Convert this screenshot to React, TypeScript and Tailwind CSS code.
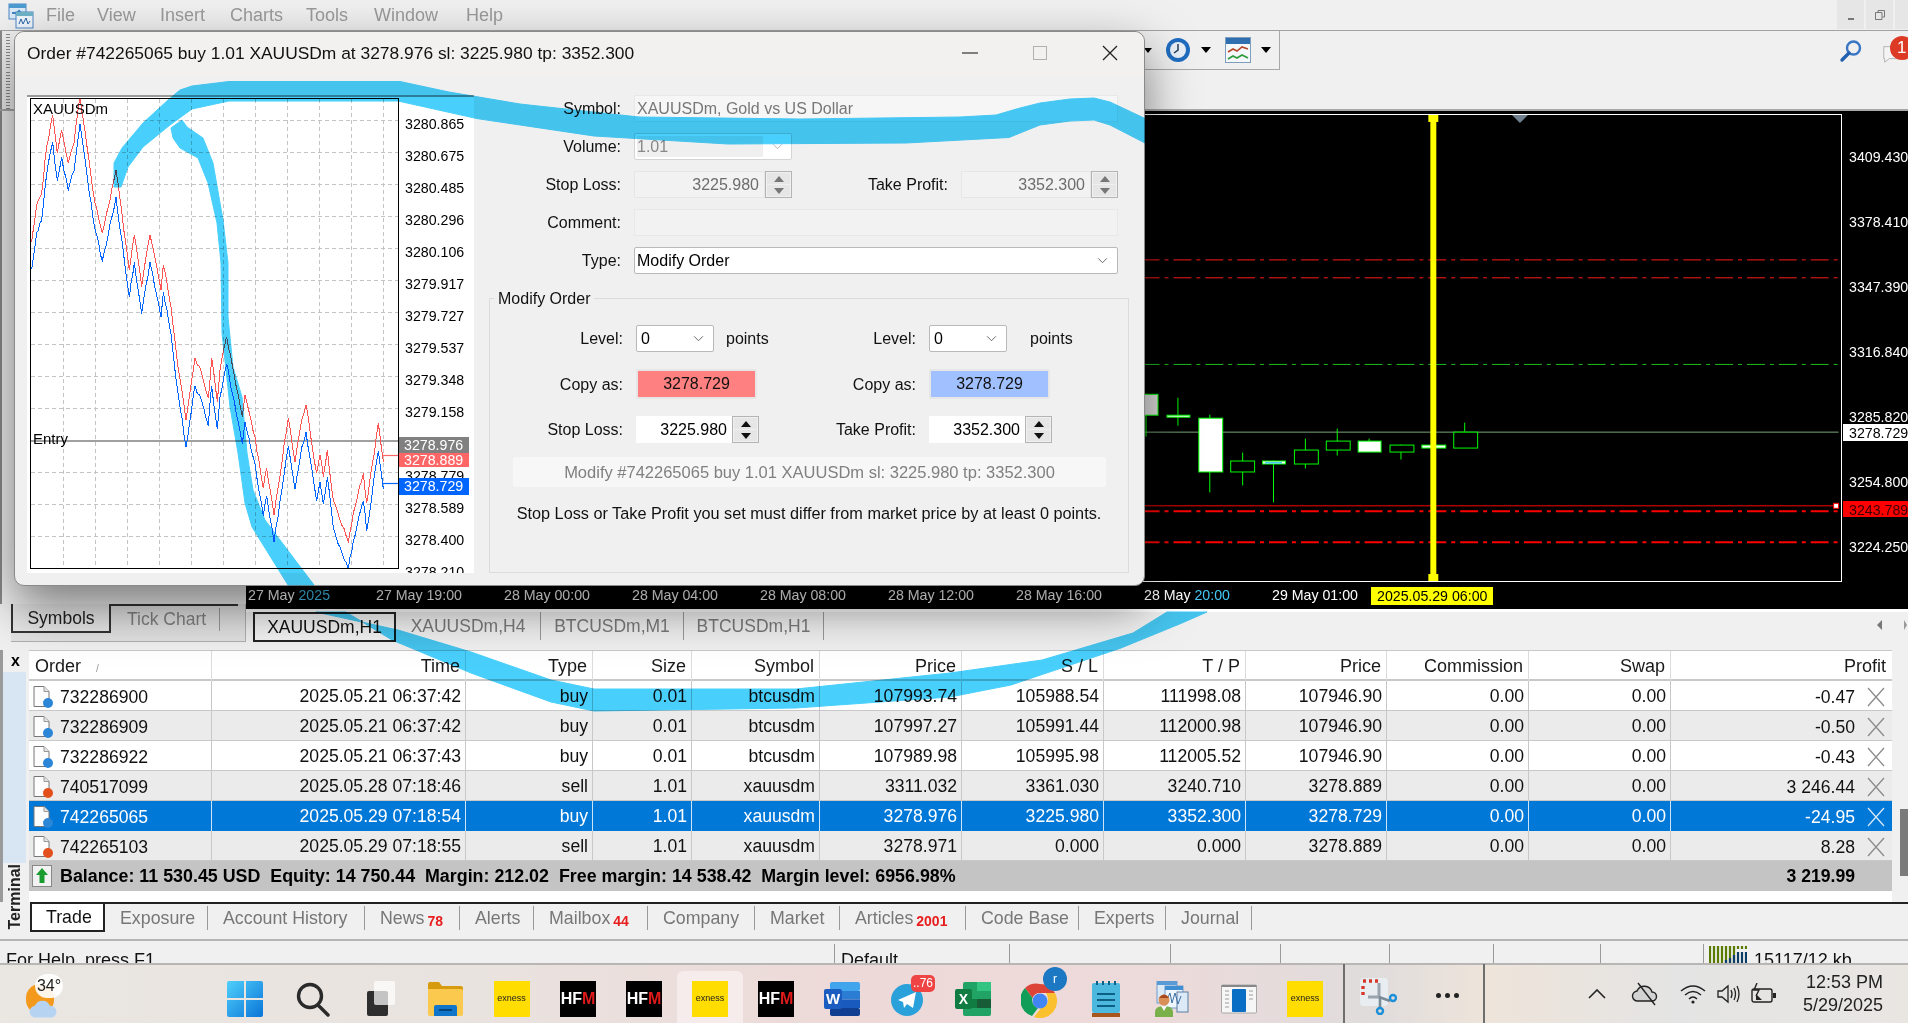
import type { ReactNode } from "react";
import clsx from "clsx";

const orders = [
  { id: "732286900", time: "2025.05.21 06:37:42", type: "buy", size: "0.01", sym: "btcusdm", price: "107993.74", sl: "105988.54", tp: "111998.08", cur: "107946.90", profit: "-0.47" },
  { id: "732286909", time: "2025.05.21 06:37:42", type: "buy", size: "0.01", sym: "btcusdm", price: "107997.27", sl: "105991.44", tp: "112000.98", cur: "107946.90", profit: "-0.50" },
  { id: "732286922", time: "2025.05.21 06:37:43", type: "buy", size: "0.01", sym: "btcusdm", price: "107989.98", sl: "105995.98", tp: "112005.52", cur: "107946.90", profit: "-0.43" },
  { id: "740517099", time: "2025.05.28 07:18:46", type: "sell", size: "1.01", sym: "xauusdm", price: "3311.032", sl: "3361.030", tp: "3240.710", cur: "3278.889", profit: "3 246.44" },
  { id: "742265065", time: "2025.05.29 07:18:54", type: "buy", size: "1.01", sym: "xauusdm", price: "3278.976", sl: "3225.980", tp: "3352.300", cur: "3278.729", profit: "-24.95" },
  { id: "742265103", time: "2025.05.29 07:18:55", type: "sell", size: "1.01", sym: "xauusdm", price: "3278.971", sl: "0.000", tp: "0.000", cur: "3278.889", profit: "8.28" },
];

const cols = "grid grid-cols-[183px_254px_127px_99px_128px_142px_142px_142px_141px_142px_142px_221px]";

const headers = ["Time", "Type", "Size", "Symbol", "Price", "S / L", "T / P", "Price", "Commission", "Swap"];

const terminalTabs = [
  { label: "Exposure", w: "w-[103px]" },
  { label: "Account History", w: "w-[157px]" },
  { label: "News", badge: "78", w: "w-[95px]" },
  { label: "Alerts", w: "w-[74px]" },
  { label: "Mailbox", badge: "44", w: "w-[114px]" },
  { label: "Company", w: "w-[107px]" },
  { label: "Market", w: "w-[85px]" },
  { label: "Articles", badge: "2001", w: "w-[126px]" },
  { label: "Code Base", w: "w-[113px]" },
  { label: "Experts", w: "w-[87px]" },
  { label: "Journal", w: "w-[86px]" },
];

const statusCells = [
  { w: "w-[829px]", text: "For Help, press F1" },
  { w: "w-[175px]", text: "Default" },
  { w: "w-[161px]" },
  { w: "w-[110px]" },
  { w: "w-[109px]" },
  { w: "w-[104px]" },
  { w: "w-[107px]" },
  { w: "w-[103px]" },
];

// price line, in zoomed chart coords (3x)
const askPoints = [
  [95, 455], [110, 345], [125, 310], [140, 170], [158, 75], [172, 190], [185, 120], [205, 220], [222, 160], [240, 20], [250, 90], [280, 310], [307, 430], [325, 350], [348, 240],
  [388, 540], [403, 435], [425, 590], [450, 435], [458, 470], [483, 600], [490, 525], [513, 650], [530, 800], [558, 990], [585, 805], [605, 850], [625, 925], [635, 805], [652, 935],
  [660, 840], [680, 740], [715, 915], [727, 980], [735, 915], [765, 1040], [790, 1195], [800, 1135], [822, 1275], [865, 985], [885, 1115], [905, 990], [918, 945], [950, 1150],
  [960, 1095], [970, 1160], [982, 1080], [1000, 1230], [1020, 1290], [1045, 1355], [1060, 1270], [1090, 1150], [1100, 1240], [1135, 1000], [1150, 1115],
];

const jagged = (shift: number, seed: number) => {
  const out: string[] = [];
  let n = seed;
  for (let i = 0; i < askPoints.length - 1; i++) {
    const [x1, y1] = askPoints[i];
    const [x2, y2] = askPoints[i + 1];
    const steps = Math.max(1, Math.round((x2 - x1) / 6));
    for (let s = 0; s < steps; s++) {
      const t = s / steps;
      n++;
      const r = Math.sin(n * 12.9898) * 43758.5453;
      const noise = s === 0 ? 0 : (r - Math.floor(r) - 0.5) * 16;
      out.push(`${(x1 + (x2 - x1) * t) / 3 - 31},${(y1 + (y2 - y1) * t + noise + shift) / 3 - 9}`);
    }
  }
  const last = askPoints[askPoints.length - 1];
  out.push(`${last[0] / 3 - 31},${(last[1] + shift) / 3 - 9}`);
  return out.join(" ");
};

const miniAxis = ["3280.865", "3280.675", "3280.485", "3280.296", "3280.106", "3279.917", "3279.727", "3279.537", "3279.348", "3279.158", "", "3278.779", "3278.589", "3278.400", "3278.210"];
const chartAxis = ["3409.430", "3378.410", "3347.390", "3316.840", "3285.820", "3254.800", "3224.250"];

const candles = [
  { x: 1135, w: 23, top: 394, bottom: 415, wt: 394, wb: 437, wx: 1146, fill: "#dddddd" },
  { x: 1167, w: 23, top: 415, bottom: 417, wt: 398, wb: 426, wx: 1178, fill: "#ffffff" },
  { x: 1199, w: 24, top: 418, bottom: 472, wt: 415, wb: 493, wx: 1210, fill: "#ffffff" },
  { x: 1231, w: 24, top: 461, bottom: 472, wt: 453, wb: 486, wx: 1243, fill: "#000000" },
  { x: 1263, w: 23, top: 461, bottom: 464, wt: 461, wb: 503, wx: 1274, fill: "#ffffff" },
  { x: 1295, w: 24, top: 450, bottom: 464, wt: 439, wb: 469, wx: 1306, fill: "#000000" },
  { x: 1327, w: 24, top: 441, bottom: 450, wt: 429, wb: 456, wx: 1338, fill: "#000000" },
  { x: 1359, w: 23, top: 441, bottom: 452, wt: 439, wb: 452, wx: 1370, fill: "#ffffff" },
  { x: 1391, w: 24, top: 445, bottom: 452, wt: 445, wb: 460, wx: 1402, fill: "#000000" },
  { x: 1423, w: 24, top: 445, bottom: 448, wt: 445, wb: 448, wx: 1434, fill: "#ffffff" },
  { x: 1455, w: 24, top: 432, bottom: 448, wt: 423, wb: 432, wx: 1466, fill: "#000000" },
];

const Chevron = ({ className }: { className?: string }) => (
  <svg viewBox="0 0 12 8" className={clsx("h-[7px] w-[11px]", className)} fill="none" stroke="currentColor" strokeWidth="1">
    <path d="M1 1.5 6 6.5 11 1.5" />
  </svg>
);

const Spin = ({ on, w }: { on?: boolean; w: string }) => (
  <div className={clsx("flex shrink-0 flex-col gap-[1px] border border-[#b4b4b4] bg-[#f0f0f0] p-[1px]", w)}>
    {[0, 1].map((i) => (
      <div key={i} className={clsx("flex flex-1 items-center justify-center bg-[#e6e6e6]", on ? "text-[#111]" : "text-[#777]")}>
        <svg viewBox="0 0 10 6" className="h-[6px] w-[10px]" fill="currentColor">
          <path d={i === 0 ? "M5 0 10 6H0Z" : "M0 0H10L5 6Z"} />
        </svg>
      </div>
    ))}
  </div>
);

const NumField = ({ value, on, w, spin }: { value: string; on?: boolean; w: string; spin: string }) => (
  <div className="flex h-[27px]">
    <div className={clsx("flex items-center justify-end pr-[5px]", w, on ? "bg-white text-black" : "border border-[#e6e6e6] bg-[#f2f2f2] text-[#6d6d6d]")}>{value}</div>
    <Spin on={on} w={spin} />
  </div>
);

const Combo = ({ value, className }: { value: string; className?: string }) => (
  <div className={clsx("flex h-[27px] items-center justify-between rounded-[2px] border border-[#b9b9b9] bg-white pr-[9px] text-black", className)}>
    <span>{value}</span>
    <Chevron className="text-[#555]" />
  </div>
);

const Label = ({ children }: { children: ReactNode }) => <div className="text-right leading-[27px] text-[#111]">{children}</div>;

const Gripper = ({ className }: { className?: string }) => (
  <div className={clsx("w-[4px] bg-[repeating-linear-gradient(0deg,#8c8c8c_0,#8c8c8c_1px,#f0f0f0_1px,#f0f0f0_3px)]", className)} />
);

const MiniChart = () => {
  const ask = jagged(0, 3);
  const bid = jagged(82, 91);
  return (
    <div className="relative flex h-[478px] w-[447px] shrink-0 overflow-hidden border-t-2 border-[#9a9a9a] bg-white pl-[3px] pt-[1px]">
      <div className="relative h-[471px] w-[369px] shrink-0 border border-black">
        <svg viewBox="0 0 367 469" className="absolute inset-0 h-full w-full">
          {Array.from({ length: 11 }, (_, i) => (
            <line key={i} x1={32.5 + i * 32} x2={32.5 + i * 32} y1="0" y2="469" stroke="#c4c4c4" strokeDasharray="4 3" />
          ))}
          {Array.from({ length: 14 }, (_, i) =>
            i === 10 ? null : <line key={i} x1="0" x2="367" y1={21.5 + i * 32} y2={21.5 + i * 32} stroke="#c4c4c4" strokeDasharray="4 3" />
          )}
          <line x1="0" x2="367" y1="342" y2="342" stroke="#808080" strokeWidth="1.4" />
          <polyline points={ask} fill="none" stroke="#ff5555" strokeWidth="1" shapeRendering="crispEdges" />
          <polyline points={bid} fill="none" stroke="#0066ff" strokeWidth="1" shapeRendering="crispEdges" />
          <path d="M352 356.5H367" stroke="#ff6666" strokeWidth="1.2" />
          <path d="M352 384.5H367" stroke="#0066ff" strokeWidth="1.2" />
        </svg>
        <span className="absolute left-[2px] top-[0px] text-[15px] leading-[20px] text-black">XAUUSDm</span>
        <span className="absolute left-[2px] top-[330px] text-[15px] leading-[20px] text-black">Entry</span>
      </div>
      <div className="ml-[6px] pt-[10px] text-[14.2px] leading-[32px] text-black">
        {miniAxis.map((v, i) => (
          <div key={i} className="h-[32px]">{v}</div>
        ))}
      </div>
      <div className="absolute left-[372px] top-[340px] flex w-[70px] flex-col text-[14.2px] text-white">
        <div className="h-[16px] bg-[#808080] pl-[5px] leading-[17px]">3278.976</div>
        <div className="h-[14px] bg-[#ff6666] pl-[5px] leading-[14px]">3278.889</div>
      </div>
      <div className="absolute left-[372px] top-[381px] h-[17px] w-[70px] bg-[#0066ff] pl-[5px] text-[14.2px] leading-[17px] text-white">3278.729</div>
    </div>
  );
};

const OrderDialog = () => (
  <div className="absolute left-[14px] top-[31px] z-10 flex h-[555px] w-[1131px] flex-col overflow-visible rounded-[10px] border border-[#8a8a8a] bg-[#f0f0f0] text-[16px] shadow-[0_20px_50px_rgba(0,0,0,0.5)]">
    <div className="flex h-[44px] shrink-0 items-center justify-between rounded-t-[10px] bg-[#f3f1f0] pb-[2px] pl-[12px] pr-[26px]">
      <span className="text-[17.4px] text-[#111]">Order #742265065 buy 1.01 XAUUSDm at 3278.976 sl: 3225.980 tp: 3352.300</span>
      <div className="flex items-center gap-[55px]">
        <svg viewBox="0 0 16 16" className="h-[16px] w-[16px]"><path d="M0 8H16" stroke="#333" strokeWidth="1.2" /></svg>
        <svg viewBox="0 0 14 14" className="h-[14px] w-[14px]"><rect x=".5" y=".5" width="13" height="13" fill="none" stroke="#b0b0b0" /></svg>
        <svg viewBox="0 0 16 16" className="h-[16px] w-[16px]"><path d="M1 1 15 15M15 1 1 15" stroke="#222" strokeWidth="1.3" /></svg>
      </div>
    </div>
    <div className="flex flex-1 pl-[12px] pt-[19px]">
      <MiniChart />
      <div className="flex-1">
        <div className="grid grid-cols-[147px_158px_143px_157px] gap-x-[13px] gap-y-[11px]">
          <Label>Symbol:</Label>
          <div className="col-span-3 flex h-[27px] items-center border border-[#e8e8e8] bg-[#f6f6f6] pl-[2px] text-[#777]">XAUUSDm, Gold vs US Dollar</div>
          <Label>Volume:</Label>
          <div className="col-span-3 flex">
            <div className="flex h-[27px] w-[158px] items-center justify-between rounded-[2px] border border-[#d4d4d4] bg-white pl-[2px] pr-[8px] text-[#888]">
              <span className="flex h-[21px] w-[126px] items-center bg-[#efefef]">1.01</span>
              <Chevron className="text-[#aaa]" />
            </div>
          </div>
          <Label>Stop Loss:</Label>
          <NumField value="3225.980" w="w-[131px]" spin="w-[27px]" />
          <Label>Take Profit:</Label>
          <NumField value="3352.300" w="w-[130px]" spin="w-[27px]" />
          <Label>Comment:</Label>
          <div className="col-span-3 h-[27px] border border-[#e8e8e8] bg-[#f2f2f2]" />
          <Label>Type:</Label>
          <Combo value="Modify Order" className="col-span-3 pl-[2px]" />
        </div>
        <div className="relative ml-[15px] mt-[24px] h-[275px] w-[640px] border border-[#dcdcdc]">
          <span className="absolute left-[4px] top-[-10px] bg-[#f0f0f0] px-[4px] leading-[20px] text-[#111]">Modify Order</span>
          <div className="mt-[26px] grid grid-cols-[133px_165px_102px_auto] items-center gap-x-[13px]">
            <Label>Level:</Label>
            <div className="flex items-center gap-[12px]">
              <Combo value="0" className="w-[78px] pl-[4px]" />
              <span className="text-[#111]">points</span>
            </div>
            <Label>Level:</Label>
            <div className="flex items-center gap-[23px]">
              <Combo value="0" className="w-[78px] pl-[4px]" />
              <span className="text-[#111]">points</span>
            </div>
          </div>
          <div className="mt-[17px] grid grid-cols-[133px_165px_102px_auto] items-center gap-x-[13px]">
            <Label>Copy as:</Label>
            <div className="flex h-[30px] w-[121px] items-center justify-center rounded-[2px] border-2 border-[#e6e6e6] bg-[#ff8080] text-[#111]">3278.729</div>
            <Label>Copy as:</Label>
            <div className="flex h-[30px] w-[121px] items-center justify-center rounded-[2px] border-2 border-[#e6e6e6] bg-[#a0c0ff] text-[#111]">3278.729</div>
          </div>
          <div className="mt-[17px] grid grid-cols-[133px_165px_102px_auto] items-center gap-x-[13px]">
            <Label>Stop Loss:</Label>
            <NumField on value="3225.980" w="w-[96px]" spin="w-[27px]" />
            <Label>Take Profit:</Label>
            <NumField on value="3352.300" w="w-[96px]" spin="w-[27px]" />
          </div>
          <div className="ml-[23px] mt-[14px] flex h-[30px] w-[593px] items-center justify-center rounded-[3px] bg-[#f7f7f7] text-[16.5px] text-[#808080]">
            Modify #742265065 buy 1.01 XAUUSDm sl: 3225.980 tp: 3352.300
          </div>
          <div className="mt-[15px] text-center text-[16.25px] leading-[22px] text-[#111]">
            Stop Loss or Take Profit you set must differ from market price by at least 0 points.
          </div>
        </div>
      </div>
    </div>
  </div>
);

const MarketChart = () => (
  <svg viewBox="246 114 1596 468" className="absolute inset-0 h-full w-full">
    <g fill="none">
      <path d="M246 259.5H1842M246 277.5H1842" stroke="#ff1a1a" strokeDasharray="18 5 4 5" />
      <path d="M246 364.5H1842" stroke="#1fbf1f" strokeDasharray="18 5 4 5" />
      <path d="M246 512H1842M246 543H1842" stroke="#ff0000" strokeWidth="2" strokeDasharray="18 5 4 5" />
      <path d="M246 432.5H1842" stroke="#7ba87b" />
      <path d="M246 506.5H1842" stroke="#ff0000" />
    </g>
    {candles.map((c) => (
      <g key={c.x}>
        <line x1={c.wx + 0.5} x2={c.wx + 0.5} y1={c.wt} y2={c.wb} stroke="#00ff00" />
        <rect x={c.x + 0.5} y={c.top + 0.5} width={c.w} height={c.bottom - c.top} fill={c.fill} stroke="#00ff00" />
      </g>
    ))}
    <rect x="1266" y="462.5" width="17" height="1.5" fill="#44c8f5" />
    <rect x="1432" y="114" width="6" height="468" fill="#ffff00" />
    <rect x="1430" y="114" width="10" height="7" fill="#ffff00" />
    <rect x="1430" y="575" width="10" height="7" fill="#ffff00" />
    <path d="M1514 114H1530L1522 122Z" fill="#708090" />
    <rect x="1837" y="504" width="5" height="5" fill="#fff" stroke="#ff0000" />
  </svg>
);

const OrderIcon = ({ sell }: { sell: boolean }) => (
  <svg viewBox="0 0 22 24" className="h-[24px] w-[22px] shrink-0">
    <path d="M2 1.5H12L17 6.5V21.5H2Z" fill="#fdfdfd" stroke="#777" />
    <path d="M12 1.5V6.5H17" fill="#e2e2e2" stroke="#999" />
    <circle cx="16" cy="18" r="5" fill={sell ? "#e4501c" : "#2b86d8"} />
  </svg>
);

const Stroke = () => (
  <svg viewBox="0 0 1908 1023" className="pointer-events-none absolute inset-0 z-20 h-full w-full mix-blend-multiply">
    <g fill="#48cffc" stroke="#48cffc" strokeLinejoin="round">
      <polygon points="114,187 114,163 122,148 143,123 168,100 180,90 192,86 229,81.5 400,81.5 449,92 520,104 639,117 800,119 960,117 996,115 1020,108 1040,103 1070,99 1094,98 1110,102 1145,118.5 1145,143 1110,125 1094,120 1070,121 1040,125 1025,131 1009,137.5 906,143 728,144 594,136 477,118.6 398,101 229,101 192,109 170,125 143,147 128,167 121,187" />
      <polygon points="171,128 182,120 187,127 203,138 213,163 223,220 228,263 228,317 233,367 242,397 247,453 253,490 265,520 280,540 314,585 288,585 252,527 245,503 238,453 230,407 222,333 221,263 217,223 208,183 198,158 180,148 173,138" />
      <polygon points="316,612 398,630 471,652 551,680 594,689 796,689 950,673 1042,660 1133,633 1167,612 1207,612 1182,623 1121,648 1011,685 950,697 796,708 594,711 551,702 471,673 392,640 346,612" />
    </g>
  </svg>
);

const ExnessTile = () => (
  <div className="flex h-[36px] w-[36px] items-center justify-center bg-[#ffdd00] text-[9px] text-[#222]">exness</div>
);

const HfmTile = () => (
  <div className="flex h-[36px] w-[36px] items-center justify-center bg-black text-[16px] font-bold leading-none text-white">
    HF<span className="text-[#e01a1a]">M</span>
  </div>
);

const taskbarIcons: { w: string; active?: boolean; node: ReactNode }[] = [
  {
    w: "w-[66px]",
    node: (
      <svg viewBox="0 0 36 36" className="h-[36px] w-[36px]">
        <defs>
          <linearGradient id="win" x1="0" y1="0" x2="1" y2="1">
            <stop offset="0" stopColor="#4fd0fb" />
            <stop offset="1" stopColor="#0a74d8" />
          </linearGradient>
        </defs>
        <path d="M2 0H17V17H0V2Q0 0 2 0ZM19 0H34Q36 0 36 2V17H19ZM0 19H17V36H2Q0 36 0 34ZM19 19H36V34Q36 36 34 36H19Z" fill="url(#win)" />
      </svg>
    ),
  },
  {
    w: "w-[70px]",
    node: (
      <svg viewBox="0 0 36 36" className="h-[36px] w-[36px]" fill="none" stroke="#2a2a2a" strokeWidth="3.4" strokeLinecap="round">
        <circle cx="15" cy="15" r="11.5" />
        <path d="M24 25 33 34" />
      </svg>
    ),
  },
  {
    w: "w-[64px]",
    node: (
      <svg viewBox="0 0 36 36" className="h-[36px] w-[36px]">
        <rect x="5" y="10" width="21" height="25" rx="2" fill="#2e2e2e" />
        <rect x="12" y="0" width="21" height="24" rx="2" fill="#ffffff" fillOpacity=".72" />
      </svg>
    ),
  },
  {
    w: "w-[66px]",
    node: (
      <svg viewBox="0 0 36 36" className="h-[36px] w-[36px]">
        <path d="M1 3Q1 1 3 1H12L15 5H34Q36 5 36 7V12H1Z" fill="#d79b0f" />
        <path d="M1 8H34Q36 8 36 10V33Q36 35 34 35H3Q1 35 1 33Z" fill="#fcc94f" />
        <path d="M7 35V26Q7 24 9 24H28Q30 24 30 26V35Z" fill="#1176c9" />
        <rect x="12" y="28" width="13" height="2" fill="#06467f" />
      </svg>
    ),
  },
  { w: "w-[67px]", node: <ExnessTile /> },
  { w: "w-[66px]", node: <HfmTile /> },
  { w: "w-[66px]", node: <HfmTile /> },
  { w: "w-[66px]", active: true, node: <ExnessTile /> },
  { w: "w-[66px]", node: <HfmTile /> },
  {
    w: "w-[68px]",
    node: (
      <svg viewBox="0 0 38 36" className="h-[36px] w-[38px]">
        <rect x="6" y="1" width="30" height="9" rx="2" fill="#41a5ee" />
        <rect x="6" y="10" width="30" height="8.5" fill="#2b7cd3" />
        <rect x="6" y="18.5" width="30" height="8.5" fill="#185abd" />
        <rect x="6" y="27" width="30" height="8" rx="2" fill="#103f91" />
        <rect x="0" y="8" width="18" height="20" rx="2" fill="#1a5cc0" />
        <text x="9" y="23" textAnchor="middle" fontSize="15" fontWeight="700" fill="#fff" fontFamily="Liberation Sans">W</text>
      </svg>
    ),
  },
  {
    w: "w-[62px]",
    node: (
      <div className="relative h-[36px] w-[36px]">
        <svg viewBox="0 0 36 36" className="h-[36px] w-[36px]">
          <circle cx="17" cy="19" r="16" fill="#2aa1da" />
          <path d="M8 19 26 11 23 27 17 23 14 27 13 21Z" fill="#fff" />
        </svg>
        <span className="absolute right-[-9px] top-[-6px] rounded-[5px] bg-[#ee4444] px-[2px] text-[12px] leading-[17px] text-white">..76</span>
      </div>
    ),
  },
  {
    w: "w-[70px]",
    node: (
      <svg viewBox="0 0 38 36" className="h-[36px] w-[38px]">
        <rect x="8" y="1" width="28" height="34" rx="2" fill="#21a366" />
        <rect x="22" y="1" width="14" height="9" fill="#33c481" />
        <rect x="8" y="18" width="14" height="9" fill="#107c41" />
        <rect x="22" y="18" width="14" height="9" fill="#185c37" />
        <rect x="0" y="8" width="17" height="20" rx="2" fill="#107c41" />
        <text x="8.5" y="23" textAnchor="middle" fontSize="14" fontWeight="700" fill="#fff" fontFamily="Liberation Sans">X</text>
      </svg>
    ),
  },
  {
    w: "w-[62px]",
    node: (
      <div className="relative h-[38px] w-[38px]">
        <svg viewBox="0 0 38 38" className="h-[38px] w-[38px]">
          <path d="M19 4A17 17 0 0 1 34 13H19A8 8 0 0 0 11.5 18L4 8A17 17 0 0 1 19 4Z" fill="#db4437" />
          <path d="M4 8 11.5 18A8 8 0 0 0 17 28L11 36A17 17 0 0 1 4 8Z" fill="#0f9d58" />
          <path d="M34 13A17 17 0 0 1 13 37L20 28A8 8 0 0 0 27 19Q27 16 25 13Z" fill="#fbc02d" />
          <circle cx="19" cy="21" r="7.5" fill="#4285f4" />
        </svg>
        <span className="absolute right-[-8px] top-[-13px] flex h-[24px] w-[24px] items-center justify-center rounded-full bg-[#1c78c2] text-[12px] text-white">r</span>
      </div>
    ),
  },
  {
    w: "w-[70px]",
    node: (
      <svg viewBox="0 0 30 36" className="h-[36px] w-[30px]">
        <rect x="1" y="2" width="28" height="30" rx="2" fill="#4db8de" />
        <rect x="1" y="32" width="28" height="4" fill="#a8561d" />
        <path d="M6 13H24M6 19H24M6 25H24" stroke="#0d5f86" strokeWidth="2" />
        <path d="M6 0V4M12 0V4M18 0V4M24 0V4" stroke="#0d5f86" strokeWidth="2" />
      </svg>
    ),
  },
  {
    w: "w-[62px]",
    node: (
      <svg viewBox="0 0 34 36" className="h-[36px] w-[34px]">
        <rect x="2" y="0" width="20" height="22" fill="#dce9f7" stroke="#6f9cc9" />
        <rect x="2" y="0" width="20" height="4" fill="#5b9bd5" />
        <rect x="10" y="5" width="18" height="22" fill="#eef5fc" stroke="#6f9cc9" />
        <rect x="10" y="5" width="18" height="4" fill="#3f8ed2" />
        <rect x="22" y="11" width="11" height="20" fill="#dce9f7" stroke="#5d7f9f" />
        <path d="M12 18 15 12 17 22 20 12 23 23 26 15" fill="none" stroke="#3a6fa5" />
        <circle cx="9" cy="19" r="5.5" fill="#d98f55" />
        <path d="M4 17Q9 10 14 17" fill="#a5481f" />
        <path d="M0 36V31Q0 25 9 25 18 25 18 31V36Z" fill="#79b04a" />
        <path d="M6 25 9 30 12 25Z" fill="#f4f4f4" />
      </svg>
    ),
  },
  {
    w: "w-[72px]",
    node: (
      <svg viewBox="0 0 36 36" className="h-[36px] w-[36px]">
        <rect x=".5" y="4" width="35" height="28" rx="1" fill="#f6f6f6" stroke="#a8a8a8" />
        <rect x=".5" y="4" width="35" height="2" fill="#888" />
        <rect x="11" y="8" width="14" height="23" rx="1" fill="#0a6fc4" />
        <path d="M4 10H8M4 14H8M4 18H8M4 22H8M4 26H8M28 10H32M28 14H32M28 18H32" stroke="#c9c9c9" strokeWidth="2" />
      </svg>
    ),
  },
  { w: "w-[60px]", node: <ExnessTile /> },
];

const App = () => (
  <div className="relative isolate flex h-[1023px] w-[1908px] flex-col overflow-hidden bg-[#f0f0f0] font-['Liberation_Sans',Arial,sans-serif] text-black">
    {/* menu */}
    <div className="flex h-[31px] shrink-0 items-center justify-between border-b border-[#a2a2a2] bg-[#f0f0f0] text-[18px] text-[#9a9a9a]">
      <div className="flex items-center pt-[1px]">
        <svg viewBox="0 0 26 26" className="ml-[8px] h-[26px] w-[26px]">
          <rect x="1" y="1" width="17" height="15" fill="#dceaf8" stroke="#4c86c6" />
          <rect x="1" y="1" width="17" height="4" fill="#4c9bd0" />
          <path d="M4 10H9L11 8 13 10H15" fill="none" stroke="#3f83c4" strokeWidth="2" />
          <rect x="8" y="9" width="17" height="16" fill="#eff6fd" stroke="#4c86c6" />
          <rect x="8" y="9" width="17" height="4" fill="#6fb3c9" />
          <path d="M11 21 13 16 15 21 18 15 20 21 22 18" fill="none" stroke="#2b64a8" />
        </svg>
        <span className="ml-[12px] w-[51px]">File</span>
        <span className="w-[63px]">View</span>
        <span className="w-[70px]">Insert</span>
        <span className="w-[76px]">Charts</span>
        <span className="w-[68px]">Tools</span>
        <span className="w-[92px]">Window</span>
        <span>Help</span>
      </div>
      <div className="flex h-[29px] self-start">
        <div className="mr-[2px] flex w-[27px] items-end justify-center bg-[#e6e6e6] pb-[9px]"><div className="h-[2px] w-[6px] bg-[#777]" /></div>
        <div className="mr-[2px] flex w-[27px] items-center justify-center bg-[#e6e6e6]">
          <svg viewBox="0 0 10 10" className="h-[10px] w-[10px]" fill="none" stroke="#777"><path d="M3 2.5V.5H9.5V7H7.5M.5 2.5H7V9.5H.5Z" /></svg>
        </div>
        <div className="w-[13px] bg-[#e6e6e6]" />
      </div>
    </div>

    {/* toolbar */}
    <div className="flex h-[80px] shrink-0 justify-between border-b-2 border-[#a8a8a8] bg-[#f0f0f0]">
      <div className="flex w-[1145px] shrink-0 flex-col gap-[3px] border-l-2 border-[#8a8a8a] pl-[4px] pt-[3px]">
        <Gripper className="h-[34px]" />
        <Gripper className="h-[38px]" />
      </div>
      <div className="mr-auto flex h-[39px] w-[135px] items-center border-b border-r border-[#a8a8a8]">
        <div className="ml-[-1px] h-0 w-0 border-x-[4px] border-t-[5px] border-x-transparent border-t-black" />
        <svg viewBox="0 0 26 26" className="ml-[13px] h-[26px] w-[26px]">
          <circle cx="13" cy="13" r="12" fill="#1f6cc0" />
          <circle cx="13" cy="13" r="8" fill="#e8eff6" />
          <path d="M13 7V13L9 16" fill="none" stroke="#243e5c" strokeWidth="1.5" />
        </svg>
        <div className="ml-[10px] h-0 w-0 border-x-[5px] border-t-[6px] border-x-transparent border-t-black" />
        <svg viewBox="0 0 26 26" className="ml-[14px] h-[26px] w-[26px]">
          <rect x=".5" y=".5" width="25" height="25" fill="#f5f8fb" stroke="#7f9dbd" />
          <rect x="1" y="1" width="24" height="6" fill="#2f6fb0" />
          <path d="M3 15 8 12 12 14 17 10 23 12" fill="none" stroke="#b5462a" strokeWidth="1.6" />
          <path d="M3 22 8 19 12 21 17 18 23 21" fill="none" stroke="#2e9a3a" strokeWidth="1.6" />
        </svg>
        <div className="ml-[10px] h-0 w-0 border-x-[5px] border-t-[6px] border-x-transparent border-t-black" />
      </div>
      <div className="flex h-[39px] items-center pr-[5px]">
        <svg viewBox="0 0 24 24" className="mr-[18px] h-[24px] w-[24px]" fill="none" strokeLinecap="round">
          <circle cx="14.5" cy="9" r="6.5" stroke="#3a76c4" strokeWidth="2.4" />
          <path d="M10 14 3 21" stroke="#2260b0" strokeWidth="3.4" />
        </svg>
        <div className="relative h-[30px] w-[22px]">
          <svg viewBox="0 0 24 24" className="absolute left-0 top-[7px] h-[22px] w-[22px]" fill="#f4f4f4" stroke="#b0b0b0">
            <path d="M3 4H21V17H9L4 21V17H3Z" />
          </svg>
          <span className="absolute left-[9px] top-[0px] flex h-[24px] w-[24px] items-center justify-start rounded-full bg-[#dd3a25] pl-[7px] text-[17px] leading-none text-white">1</span>
        </div>
      </div>
    </div>

    <div className="flex h-[539px] shrink-0">
      {/* symbols pane */}
      <div className="flex w-[246px] shrink-0 flex-col text-[17.5px]">
        <div className="flex flex-1 gap-[3px] border-l-2 border-[#8a8a8a] bg-[#f0f0f0] pl-[4px]">
          <Gripper className="h-[480px] bg-none" />
        </div>
        <div className="h-[46px] shrink-0 bg-[#f0f0f0] pl-[11px]">
          <div className="flex h-[38px] border-r border-b border-[#b0b0b0] bg-[#e2e2e2]">
            <div className="flex h-[29px] w-[100px] items-center justify-center border-x-2 border-b-2 border-[#333] bg-[#e8e8e8] pt-[1px] text-[#222]">Symbols</div>
            <div className="h-[29px] w-[127px] border-t-2 border-[#333] pl-[16px] pt-[2px]">
              <div className="h-[23px] w-[93px] border-r border-[#999] leading-[22px] text-[#808080]">Tick Chart</div>
            </div>
          </div>
        </div>
      </div>
      <div className="flex flex-1 flex-col">
        {/* chart */}
        <div className="flex h-[498px] shrink-0 flex-col bg-black text-[14.2px] text-white">
          <div className="mt-[3px] flex h-[468px]">
            <div className="relative w-[1596px] shrink-0 border border-white">
              <MarketChart />
            </div>
            <div className="relative flex-1 pl-[7px] pt-[11px]">
              {chartAxis.map((v) => (
                <div key={v} className="h-[65px] leading-[65px]">{v}</div>
              ))}
              <div className="absolute left-[1px] top-[310px] h-[17px] w-[65px] bg-white pl-[6px] leading-[18px] text-black">3278.729</div>
              <div className="absolute left-[1px] top-[387px] h-[16px] w-[65px] bg-[#ff0000] pl-[6px] leading-[18px] text-[#3a0000]">3243.789</div>
            </div>
          </div>
          <div className="flex h-[27px] items-center pl-[2px]">
            <span className="w-[128px]">27 May <span className="text-[#44c8f5]">2025</span></span>
            <span className="w-[128px]">27 May 19:00</span>
            <span className="w-[128px]">28 May 00:00</span>
            <span className="w-[128px]">28 May 04:00</span>
            <span className="w-[128px]">28 May 08:00</span>
            <span className="w-[128px]">28 May 12:00</span>
            <span className="w-[128px]">28 May 16:00</span>
            <span className="w-[128px]">28 May <span className="text-[#44c8f5]">20:00</span></span>
            <span className="w-[99px]">29 May 01:00</span>
            <span className="h-[18px] bg-[#ffff00] px-[6px] leading-[18px] text-black">2025.05.29 06:00</span>
          </div>
        </div>
        {/* chart tabs */}
        <div className="flex h-[41px] shrink-0 border-t-[3px] border-white bg-[#f0f0f0] text-[17.5px]">
          <div className="ml-[7px] flex h-[30px] w-[143px] items-center justify-center border-2 border-[#222] bg-[#f4f4f4] text-[#111]">XAUUSDm,H1</div>
          <div className="flex h-[28px] w-[145px] items-center justify-center border-r border-[#999] text-[#7a7a7a]">XAUUSDm,H4</div>
          <div className="flex h-[28px] w-[143px] items-center justify-center border-r border-[#999] text-[#7a7a7a]">BTCUSDm,M1</div>
          <div className="flex h-[28px] w-[140px] items-center justify-center border-r border-[#999] text-[#7a7a7a]">BTCUSDm,H1</div>
          <div className="flex flex-1 items-start justify-end gap-[22px] pr-[1px] pt-[8px]">
            <div className="h-0 w-0 border-y-[5px] border-r-[5px] border-y-transparent border-r-[#777]" />
            <div className="h-0 w-0 border-y-[5px] border-l-[3px] border-y-transparent border-l-[#999]" />
          </div>
        </div>
      </div>
    </div>

    {/* terminal */}
    <div className="flex h-[252px] shrink-0 text-[17.6px]">
      <div className="w-[29px] shrink-0 border-l-[3px] border-[#9a9a9a] bg-[#f0f0f0]">
        <div className="h-[22px] pl-[8px] text-[16px] font-bold leading-[22px]">x</div>
        <div className="h-[191px] w-[23px] bg-[#d8e5f3]" />
        <div className="flex h-[67px] w-[23px] items-center justify-center">
          <span className="rotate-180 text-[16px] font-bold leading-[20px] text-[#222] [writing-mode:vertical-rl]">Terminal</span>
        </div>
      </div>
      <div className="w-[1863px] shrink-0 bg-white">
        <div className={clsx(cols, "h-[31px] border-t border-b-2 border-[#c8c8c8] bg-white text-[18px] text-[#1a1a1a]")}>
          <div className="border-r border-[#dcdcdc] pl-[6px] leading-[31px]">
            Order <span className="ml-[10px] text-[10px] text-[#999]">/</span>
          </div>
          {headers.map((h, i) => (
            <div key={i} className="border-r border-[#dcdcdc] pr-[5px] text-right leading-[31px]">{h}</div>
          ))}
          <div className="pr-[6px] text-right leading-[31px]">Profit</div>
        </div>
        {orders.map((o, i) => {
          const selected = o.id === "742265065";
          const cell = clsx("border-r pr-[4px] text-right leading-[31px]", selected ? "border-[#cfe3f7]" : "border-[#c8c8c8]");
          return (
            <div
              key={o.id}
              className={clsx(cols, "h-[30px] border-b", selected ? "border-[#0078d7] bg-[#0078d7] text-white" : "border-[#c8c8c8] text-[#111]", !selected && (i % 2 === 0 ? "bg-white" : "bg-[#ebebeb]"))}
            >
              <div className={clsx("flex items-center border-r pl-[3px]", selected ? "border-[#cfe3f7]" : "border-[#c8c8c8]")}>
                <OrderIcon sell={o.type === "sell"} />
                <span className="ml-[6px] mt-[2px]">{o.id}</span>
              </div>
              <div className={cell}>{o.time}</div>
              <div className={cell}>{o.type}</div>
              <div className={cell}>{o.size}</div>
              <div className={cell}>{o.sym}</div>
              <div className={cell}>{o.price}</div>
              <div className={cell}>{o.sl}</div>
              <div className={cell}>{o.tp}</div>
              <div className={cell}>{o.cur}</div>
              <div className={cell}>0.00</div>
              <div className={cell}>0.00</div>
              <div className="flex items-center justify-end gap-[12px] pr-[7px]">
                <span className="mt-[2px]">{o.profit}</span>
                <svg viewBox="0 0 18 20" className="h-[20px] w-[18px]" fill="none" stroke={selected ? "#d9e8f6" : "#8b8b8b"} strokeWidth="1.3">
                  <path d="M1 1 17 19M17 1 1 19" />
                </svg>
              </div>
            </div>
          );
        })}
        <div className="flex h-[30px] items-center justify-between bg-[#c4c4c4] pr-[37px] font-bold">
          <div className="flex items-center">
            <svg viewBox="0 0 20 24" className="ml-[3px] h-[24px] w-[20px]">
              <rect x=".5" y="1.5" width="19" height="21" fill="#f2f2f2" stroke="#888" />
              <path d="M10 4 16 11H12.5V19H7.5V11H4Z" fill="#1b9c2e" />
            </svg>
            <span className="ml-[8px] whitespace-pre text-[17.85px]">Balance: 11 530.45 USD  Equity: 14 750.44  Margin: 212.02  Free margin: 14 538.42  Margin level: 6956.98%</span>
          </div>
          <span>3 219.99</span>
        </div>
      </div>
      {/* scrollbar */}
      <div className="relative w-[16px] shrink-0 bg-[#f0f0f0]">
        <div className="absolute right-0 top-[159px] h-[67px] w-[8px] bg-[#7a7a7a]" />
      </div>
    </div>

    {/* terminal tabs */}
    <div className="flex h-[37px] shrink-0 bg-[#f0f0f0] pl-[30px] text-[17.8px]">
      <div className="flex h-[30px] w-[75px] items-center border-2 border-[#222] bg-white pl-[14px] text-[#111]">Trade</div>
      <div className="flex h-[30px] flex-1 border-t-2 border-[#222]">
        {terminalTabs.map((t) => (
          <div key={t.label} className={clsx("mt-[2px] flex h-[24px] shrink-0 items-center border-r border-[#999] pl-[15px] text-[#777]", t.w)}>
            {t.label}
            {t.badge && <span className="ml-[3px] mt-[6px] text-[14px] font-bold text-[#e81c1c]">{t.badge}</span>}
          </div>
        ))}
      </div>
    </div>

    {/* status bar */}
    <div className="flex h-[24px] shrink-0 overflow-hidden border-t-2 border-[#b4b4b4] bg-[#f0f0f0] pl-[6px] pt-[3px] text-[18px] text-[#111]">
      {statusCells.map((c, i) => (
        <div key={i} className={clsx("h-[30px] shrink-0 border-r border-[#9a9a9a] leading-[32px]", c.w)}>
          {c.text && <span className={i === 1 ? "ml-[6px]" : ""}>{c.text}</span>}
        </div>
      ))}
      <div className="ml-[5px] flex h-[20px] items-end gap-[2px]">
        <svg viewBox="0 0 38 18" className="h-[18px] w-[38px]">
          <path d="M1 0V18M5 0V18M9 0V18M13 0V18M17 0V18M21 0V18M25 0V18" stroke="#5b7a00" strokeWidth="2.2" />
          <path d="M29 0V3M33 0V3M37 0V3" stroke="#5b7a00" strokeWidth="2.2" />
          <path d="M17 14V18M21 12V18M25 9V18M29 6V18M33 6V18M37 6V18" stroke="#0b3d66" strokeWidth="2.2" />
        </svg>
      </div>
      <span className="ml-[7px] leading-[32px] text-[#111]">15117/12 kb</span>
    </div>

    {/* taskbar */}
    <div className="flex h-[60px] shrink-0 items-center border-t-2 border-[#b8b6b4] bg-[linear-gradient(90deg,#eae6e2_0%,#e9e3df_25%,#edd9d8_45%,#eddada_60%,#e0dcdc_72%,#eee4da_78%,#e4e4e4_88%,#e9e6e2_100%)]">
      <div className="relative ml-[24px] mt-[2px] h-[46px] w-[188px] shrink-0">
        <div className="absolute left-[2px] top-[12px] h-[30px] w-[28px] rounded-full bg-[#f39a1d]" />
        <svg viewBox="0 0 24 18" className="absolute left-[5px] top-[24px] h-[22px] w-[28px]">
          <path d="M6 18A5 5 0 0 1 5 8 7 7 0 0 1 18 8 5 5 0 0 1 19 18Z" fill="#b6d4f2" />
        </svg>
        <div className="absolute left-[11px] top-[2px] flex h-[24px] w-[28px] items-center justify-center rounded-full bg-white/90 text-[16px] text-[#222]">34°</div>
      </div>
      {taskbarIcons.map((t, i) => (
        <div key={i} className={clsx("flex h-[52px] shrink-0 items-center justify-center self-end pt-[4px]", t.w, t.active && "rounded-t-[6px] bg-[#f6ecec]")}>
          {t.node}
        </div>
      ))}
      <div className="ml-[8px] h-[60px] w-[2px] shrink-0 bg-[#6e6e6e]" />
      <div className="flex w-[66px] shrink-0 justify-center pt-[4px]">
        <svg viewBox="0 0 38 38" className="h-[38px] w-[38px]">
          <rect x="1" y="1" width="28" height="28" rx="4" fill="#e8edf2" />
          <path d="M4 4H7M10 4H13M16 4H19M4 9V12M4 15V18" stroke="#d7382a" strokeWidth="3.4" fill="none" />
          <path d="M20 6V20H9" fill="none" stroke="#9aa4ad" strokeWidth="3" />
          <path d="M20 20 31 24" stroke="#7a8a96" strokeWidth="2.6" />
          <circle cx="34" cy="21" r="3" fill="none" stroke="#1c8fd8" strokeWidth="2.4" />
          <path d="M21 21 21 30" stroke="#7a8a96" strokeWidth="2.6" />
          <circle cx="21" cy="34" r="3" fill="none" stroke="#1c8fd8" strokeWidth="2.4" />
        </svg>
      </div>
      <div className="flex w-[72px] shrink-0 items-center justify-center gap-[4px] pt-[2px]">
        <span className="h-[5px] w-[5px] rounded-full bg-[#222]" />
        <span className="h-[5px] w-[5px] rounded-full bg-[#222]" />
        <span className="h-[5px] w-[5px] rounded-full bg-[#222]" />
      </div>
      <div className="h-[60px] w-[2px] shrink-0 bg-[#6e6e6e]" />
      <div className="ml-[103px] flex shrink-0 items-center">
        <svg viewBox="0 0 18 10" className="h-[10px] w-[18px]" fill="none" stroke="#222" strokeWidth="1.6"><path d="M1 9 9 1 17 9" /></svg>
        <svg viewBox="0 0 28 24" className="ml-[25px] h-[24px] w-[28px]">
          <path d="M7 19A5 5 0 0 1 6 9 8 8 0 0 1 21 10 4.5 4.5 0 0 1 21 19Z" fill="#d2d2d2" stroke="#222" strokeWidth="1.4" />
          <path d="M7 1 24 23" stroke="#222" strokeWidth="1.4" />
        </svg>
        <svg viewBox="0 0 26 20" className="ml-[21px] h-[20px] w-[26px]" fill="none" stroke="#222" strokeWidth="1.5">
          <path d="M1 7Q13 -3 25 7M5 11Q13 4 21 11M9 15Q13 11 17 15" />
          <circle cx="13" cy="18" r="1.6" fill="#222" stroke="none" />
        </svg>
        <svg viewBox="0 0 26 20" className="ml-[11px] h-[20px] w-[26px]" fill="none" stroke="#222" strokeWidth="1.3">
          <path d="M1 7H5L11 2V18L5 13H1Z" />
          <path d="M14 6Q16 10 14 14M17 4Q20 10 17 16M20 2Q24 10 20 18" />
        </svg>
        <svg viewBox="0 0 26 22" className="ml-[8px] h-[22px] w-[26px]" fill="none" stroke="#222" strokeWidth="1.4">
          <rect x="1" y="6" width="20" height="13" rx="2" />
          <rect x="22" y="10" width="3" height="5" fill="#222" stroke="none" />
          <path d="M5 17V11L11 17Z" fill="#222" stroke="none" />
          <path d="M6 0 3 7H8L5 13" />
        </svg>
      </div>
      <div className="ml-auto pr-[25px] text-right text-[18px] leading-[23px] text-[#222]">
        <div>12:53 PM</div>
        <div>5/29/2025</div>
      </div>
    </div>

    <OrderDialog />
    <Stroke />
  </div>
);

export default App;
